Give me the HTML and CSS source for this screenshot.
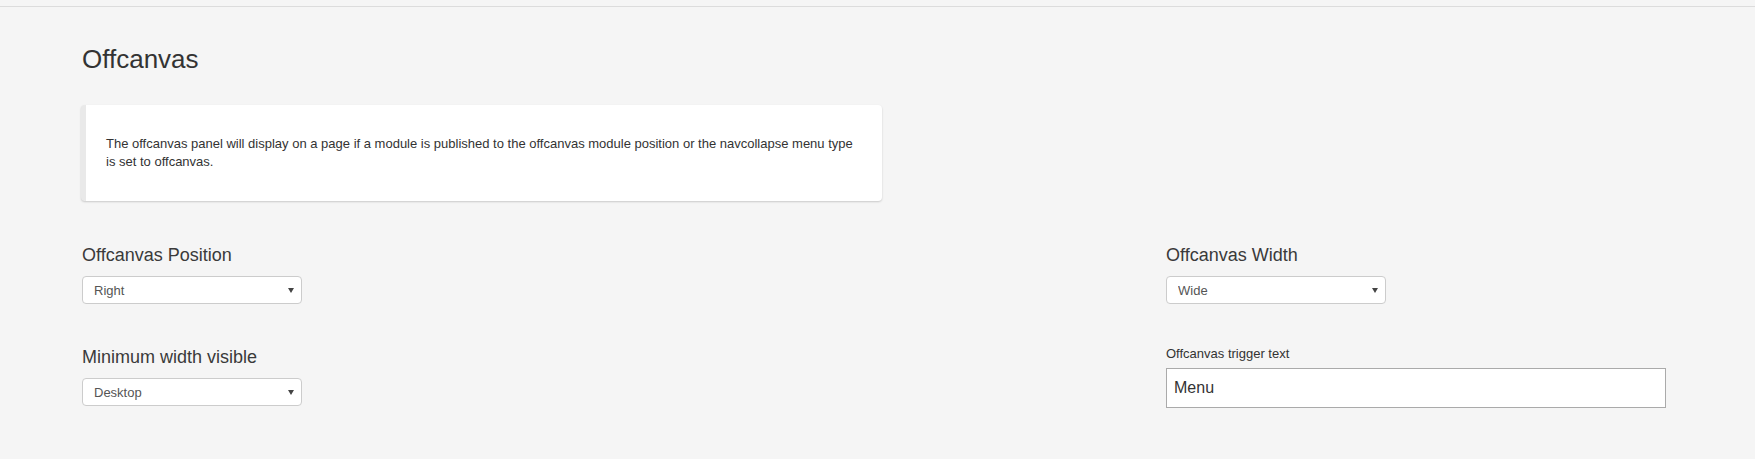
FILE: index.html
```html
<!DOCTYPE html>
<html lang="en">
<head>
    <meta charset="UTF-8">
    <meta name="viewport" content="width=device-width, initial-scale=1.0">
    <title>Offcanvas</title>
    <link rel="stylesheet" href="styles.css">
</head>
<body>
    <!-- Top bar edge -->
    <div class="topbar"></div>

    <main class="page">
        <h1 class="page-title">Offcanvas</h1>

        <!-- Info card -->
        <div class="info-card">
            <p>The offcanvas panel will display on a page if a module is published to the offcanvas module position or the navcollapse menu type is set to offcanvas.</p>
        </div>

        <!-- Settings -->
        <div class="settings">
            <div class="field">
                <label class="field-label" for="position">Offcanvas Position</label>
                <div class="select-wrap">
                    <select id="position">
                        <option>Right</option>
                        <option>Left</option>
                    </select>
                </div>
            </div>
            <div class="field">
                <label class="field-label" for="width">Offcanvas Width</label>
                <div class="select-wrap">
                    <select id="width">
                        <option>Wide</option>
                        <option>Narrow</option>
                    </select>
                </div>
            </div>
            <div class="field">
                <label class="field-label" for="visible">Minimum width visible</label>
                <div class="select-wrap">
                    <select id="visible">
                        <option>Desktop</option>
                        <option>Tablet</option>
                        <option>Phone</option>
                    </select>
                </div>
            </div>
            <div class="field">
                <label class="field-label small" for="trigger">Offcanvas trigger text</label>
                <input class="text-input" id="trigger" type="text" value="Menu">
            </div>
        </div>
    </main>
</body>
</html>
```

FILE: styles.css
```css
body {
    font-family: "Liberation Sans", Arial, sans-serif;
    margin: 0;
    padding: 0;
    background-color: #f5f5f5;
    color: #333;
}

.topbar {
    height: 6px;
    border-bottom: 1px solid #dcdcdc;
}

.page {
    padding: 0 82px 0 81px;
}

.page-title {
    font-size: 26px;
    font-weight: normal;
    line-height: 30px;
    margin: 37px 0 31px 1px;
    color: #333;
}

/* Info card */
.info-card {
    width: 756px;
    background-color: #fff;
    border-left: 5px solid #e9e9e9;
    border-radius: 4px;
    box-shadow: 0 1px 2px rgba(0, 0, 0, 0.18);
    padding: 30px 20px;
}

.info-card p {
    margin: 0;
    font-size: 13px;
    line-height: 18px;
    color: #333;
}

/* Settings grid */
.settings {
    display: grid;
    grid-template-columns: 1084px 1fr;
    row-gap: 43px;
    margin-top: 44px;
    padding-left: 1px;
}

.field {
    display: flex;
    flex-direction: column;
    align-items: flex-start;
}

.field-label {
    font-size: 18px;
    line-height: 20px;
    color: #3a3a3a;
    margin-bottom: 11px;
}

.field-label.small {
    font-size: 13px;
    line-height: 14px;
    margin-bottom: 7px;
    color: #333;
}

.select-wrap {
    position: relative;
    width: 220px;
}

.select-wrap select {
    appearance: none;
    -webkit-appearance: none;
    display: block;
    width: 100%;
    height: 28px;
    margin: 0;
    padding: 0 24px 0 11px;
    font-family: "Liberation Sans", Arial, sans-serif;
    font-size: 13px;
    color: #555;
    background-color: #fff;
    border: 1px solid #ccc;
    border-radius: 4px;
}

.select-wrap::after {
    content: "";
    position: absolute;
    right: 8px;
    top: 12px;
    border-left: 3px solid transparent;
    border-right: 3px solid transparent;
    border-top: 5px solid #444;
    pointer-events: none;
}

.text-input {
    box-sizing: border-box;
    width: 500px;
    height: 40px;
    margin: 0;
    padding: 0 7px;
    font-family: "Liberation Sans", Arial, sans-serif;
    font-size: 16px;
    color: #333;
    background-color: #fff;
    border: 1px solid #aaa;
    border-radius: 0;
}
```
